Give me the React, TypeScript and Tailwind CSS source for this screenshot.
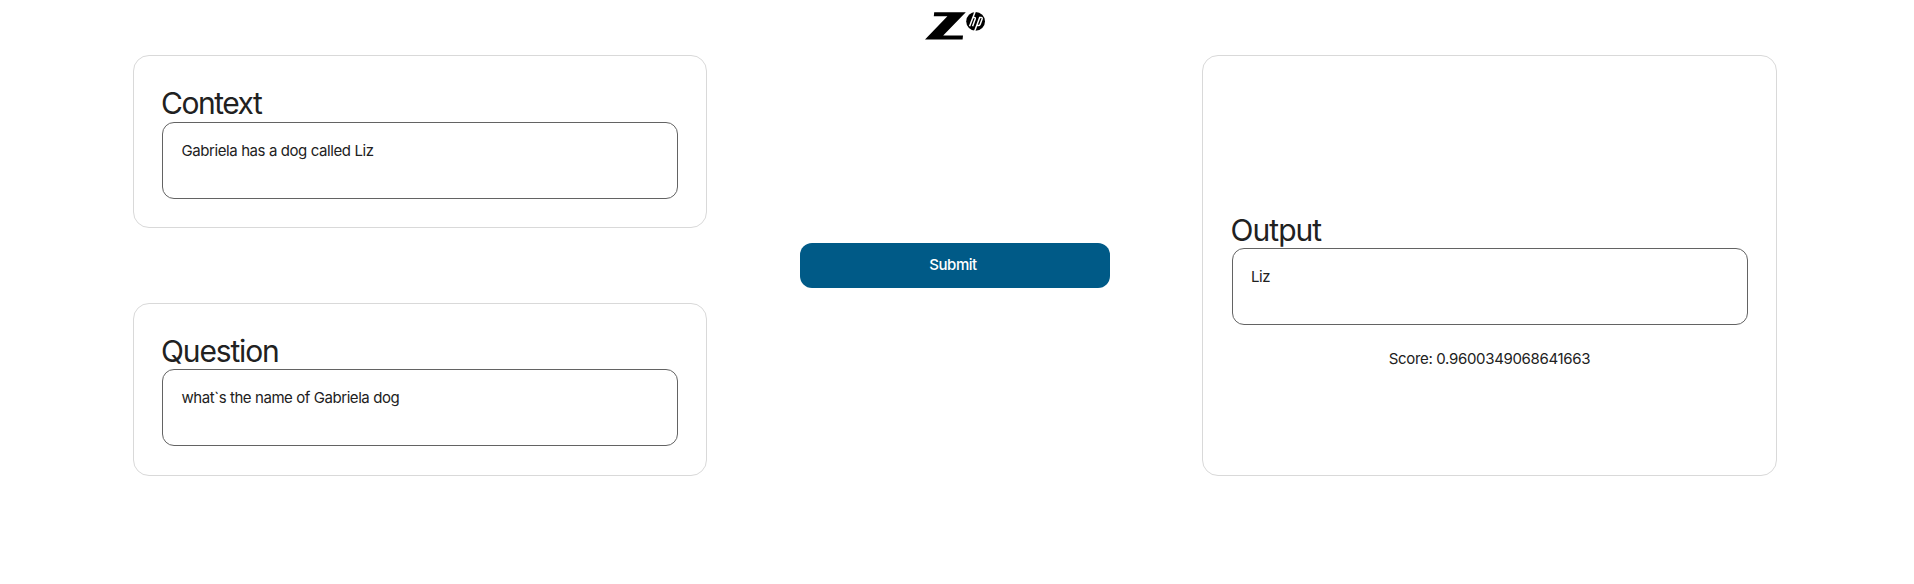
import type { ReactNode } from "react";

function Logo() {
  return (
    <svg width="62" height="30" viewBox="0 0 62 30" aria-label="Z by HP">
      <path d="M9.2 1.2H40.8L18.2 24.6H38L37.6 28.4H0L22.4 5.2H8.8Z" fill="#000" />
      <circle cx="50.6" cy="10.4" r="9.4" fill="#000" />
      <g fill="none" stroke="#fff" strokeWidth="1.5">
        <path d="M50.2 .4L44.6 15.2M47.6 6.5H49.3Q50.7 6.5 50.2 8L47.6 15.2" />
        <path d="M49.5 20.4L54.7 6.5H56.2Q57.6 6.5 57.1 8L55.2 13.2Q54.7 14.6 53.3 14.6H51.6" />
      </g>
    </svg>
  );
}

function Card({ className, children }: { className: string; children: ReactNode }) {
  return (
    <section className={`flex w-full flex-col rounded-2xl border border-[#d9d9d9] ${className}`}>
      {children}
    </section>
  );
}

function Field({ value, className }: { value: string; className: string }) {
  return (
    <div className={`h-[77px] shrink-0 rounded-xl border border-[#636363] px-[18.5px] text-[15px] leading-6 ${className}`}>
      {value}
    </div>
  );
}

export default function App() {
  return (
    <main className="h-[584px] bg-white font-[Inter,sans-serif] text-[#212121]">
      <header className="flex h-[55px] pt-[11px] pl-[925px]">
        <Logo />
      </header>
      <div className="flex h-[421px] items-stretch pl-[133px]">
        <div className="flex w-[574px] flex-col justify-between">
          <Card className="h-[173px] px-7 pt-7">
            <h2 className="-ml-px h-[38px] text-[30px] leading-[39px] tracking-[-1.5px]">Context</h2>
            <Field className="pt-4 tracking-[-0.41px]" value="Gabriela has a dog called Liz" />
          </Card>
          <Card className="h-[173px] px-7 pt-7">
            <h2 className="-ml-px h-[37px] text-[30px] leading-[39px] tracking-[-1.15px]">Question</h2>
            <Field className="pt-4 tracking-[-0.43px]" value="what`s the name of Gabriela dog" />
          </Card>
        </div>
        <div className="ml-[93px] flex w-[310px] flex-col pt-[188px]">
          <button className="h-[45px] rounded-xl bg-[#005a87] pr-1 text-[15px] font-medium tracking-[-0.45px] text-white">
            Submit
          </button>
        </div>
        <div className="ml-[92px] flex w-[575px]">
          <Card className="px-[28.5px] pt-[154px]">
            <h2 className="-ml-px h-[38px] text-[30px] leading-[41px] tracking-[-0.95px]">Output</h2>
            <Field className="pt-4 tracking-[-0.45px]" value="Liz" />
            <p className="mt-[22px] text-center text-[15px] leading-6 tracking-[-0.33px]">Score: 0.9600349068641663</p>
          </Card>
        </div>
      </div>
    </main>
  );
}
